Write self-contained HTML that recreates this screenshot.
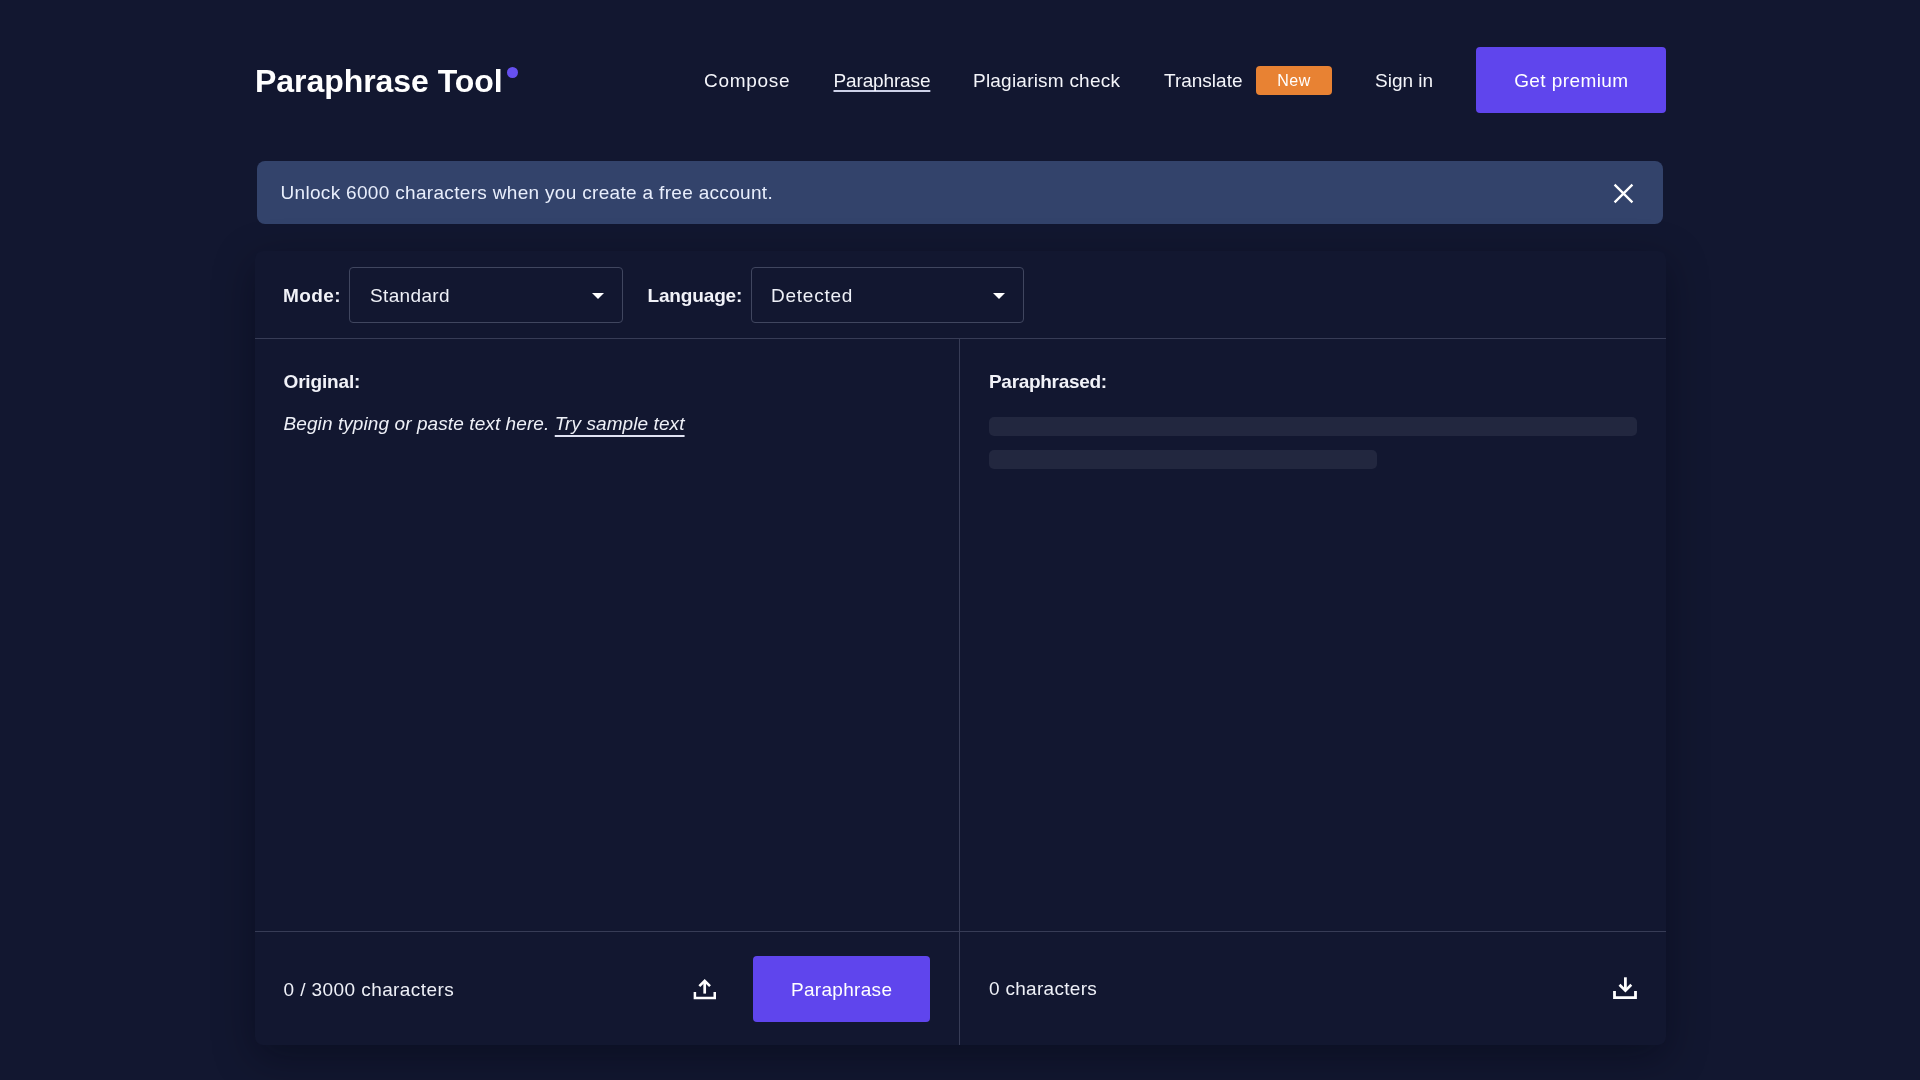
<!DOCTYPE html>
<html lang="en">
<head>
<meta charset="utf-8">
<title>Paraphrase Tool</title>
<style>
*{box-sizing:border-box;margin:0;padding:0}
html,body{width:1920px;height:1080px;overflow:hidden}
body{background:#121730;color:#fff;font-family:"Liberation Sans",sans-serif;position:relative}
.abs{position:absolute;white-space:nowrap;line-height:1}
.logo{left:255px;top:64.5px;font-size:32px;font-weight:700;letter-spacing:-0.05px;color:#fff}
.dot{position:absolute;left:506.5px;top:66.5px;width:11px;height:11px;border-radius:50%;background:#6650f0}
.nav{font-size:19px;color:#f4f5fa;top:71px}
.nav.u{text-decoration:underline;text-decoration-skip-ink:none;text-underline-offset:3px;text-decoration-thickness:2px;text-decoration-color:#cdd1e8}
.badge{position:absolute;left:1256px;top:66px;width:75.5px;height:28.5px;border-radius:4px;background:#e88233;color:#fff;font-size:16px;line-height:29px;text-align:center;letter-spacing:.6px;text-indent:.6px}
.btn{position:absolute;background:#5f45ed;border-radius:4px;color:#fff;font-size:19px;text-align:center}
.banner{position:absolute;left:257px;top:161px;width:1406px;height:63px;border-radius:8px;background:#33436b}
.banner span{position:absolute;left:23.5px;top:22px;font-size:19px;line-height:1;color:#e8eefc;white-space:nowrap;letter-spacing:.32px}
.card{position:absolute;left:255px;top:251px;width:1411px;height:794px;border-radius:8px;background:#121730;box-shadow:0 12px 40px rgba(3,5,16,.40)}
.hl{position:absolute;left:255px;width:1411px;height:1px;background:#373c56}
.vl{position:absolute;left:959px;top:338px;width:1px;height:707px;background:#373c56}
.lbl{font-size:19px;font-weight:700;color:#f1f2f8}
.sel{position:absolute;top:267px;width:274px;height:56px;border:1px solid #40465f;border-radius:4px}
.sel span{position:absolute;left:20px;top:18px;font-size:19px;line-height:1;color:#eef0f7}
.sel i{position:absolute;right:18px;top:25px;width:0;height:0;border-left:6px solid transparent;border-right:6px solid transparent;border-top:6px solid #fff}
.skel{position:absolute;left:989px;height:19px;border-radius:5px;background:#22273f}
.txt{font-size:19px;color:#eef0f7}
</style>
</head>
<body><div style="position:absolute;left:0;top:0;width:1920px;height:1080px;will-change:transform">
<div class="abs logo">Paraphrase Tool</div><div class="dot"></div>
<div class="abs nav" style="left:704px;letter-spacing:.7px">Compose</div>
<div class="abs nav u" style="left:833.5px;letter-spacing:-.14px">Paraphrase</div>
<div class="abs nav" style="left:973px;letter-spacing:.22px">Plagiarism check</div>
<div class="abs nav" style="left:1164px">Translate</div>
<div class="badge">New</div>
<div class="abs nav" style="left:1375px">Sign in</div>
<div class="btn" style="left:1476px;top:47px;width:190px;height:66px;line-height:68px;letter-spacing:.42px;text-indent:.8px">Get premium</div>

<div class="banner"><span>Unlock 6000 characters when you create a free account.</span>
<svg style="position:absolute;left:1355.5px;top:21.5px" width="21" height="21" viewBox="0 0 20 20"><path d="M1.5 1.5L18.5 18.5M18.5 1.5L1.5 18.5" stroke="#fff" stroke-width="2.2" fill="none"/></svg>
</div>

<div class="card"></div>
<div class="hl" style="top:338px"></div>
<div class="hl" style="top:931px"></div>
<div class="vl"></div>

<div class="abs lbl" style="left:283px;top:286px;letter-spacing:.4px">Mode:</div>
<div class="sel" style="left:349px"><span style="letter-spacing:.35px">Standard</span><i></i></div>
<div class="abs lbl" style="left:647.5px;top:286px;letter-spacing:-.15px">Language:</div>
<div class="sel" style="left:751px;width:273px"><span style="letter-spacing:.75px;left:19px">Detected</span><i></i></div>

<div class="abs lbl" style="left:283.5px;top:372px;letter-spacing:-.15px">Original:</div>
<div class="abs txt" style="left:283.5px;top:414px;font-style:italic;letter-spacing:.09px">Begin typing or paste text here. <span style="text-decoration:underline;text-decoration-skip-ink:none;text-underline-offset:5px;text-decoration-thickness:2px;text-decoration-color:#dfe2f2">Try sample text</span></div>

<div class="abs lbl" style="left:989px;top:372px;letter-spacing:-.3px">Paraphrased:</div>
<div class="skel" style="top:417px;width:648px"></div>
<div class="skel" style="top:450px;width:388px"></div>

<div class="abs txt" style="left:283.5px;top:980px;letter-spacing:.42px">0 / 3000 characters</div>
<svg style="position:absolute;left:690px;top:975px" width="30" height="30" viewBox="0 0 30 30" fill="none" stroke="#fff"><path d="M4.9 17V22.95H24.75V17" stroke-width="2.5"/><path d="M14.7 6.2V18.6" stroke-width="2.7"/><path d="M9.35 11.2L14.7 5.84L20.05 11.2" stroke-width="2.6" stroke-miterlimit="10"/></svg>
<div class="btn" style="left:753px;top:956px;width:177px;height:66px;line-height:67px;letter-spacing:.3px;text-indent:.3px">Paraphrase</div>

<div class="abs txt" style="left:989px;top:979px;letter-spacing:.3px">0 characters</div>
<svg style="position:absolute;left:1610px;top:973px" width="30" height="30" viewBox="0 0 30 30" fill="none" stroke="#fff"><path d="M4.5 17.9V24.6H25.5V17.9" stroke-width="2.8"/><path d="M15.4 4.3V17.2" stroke-width="2.8"/><path d="M9.5 11.8L15.4 17.6L21.3 11.8" stroke-width="2.7" stroke-miterlimit="10"/></svg>
</div></body>
</html>
